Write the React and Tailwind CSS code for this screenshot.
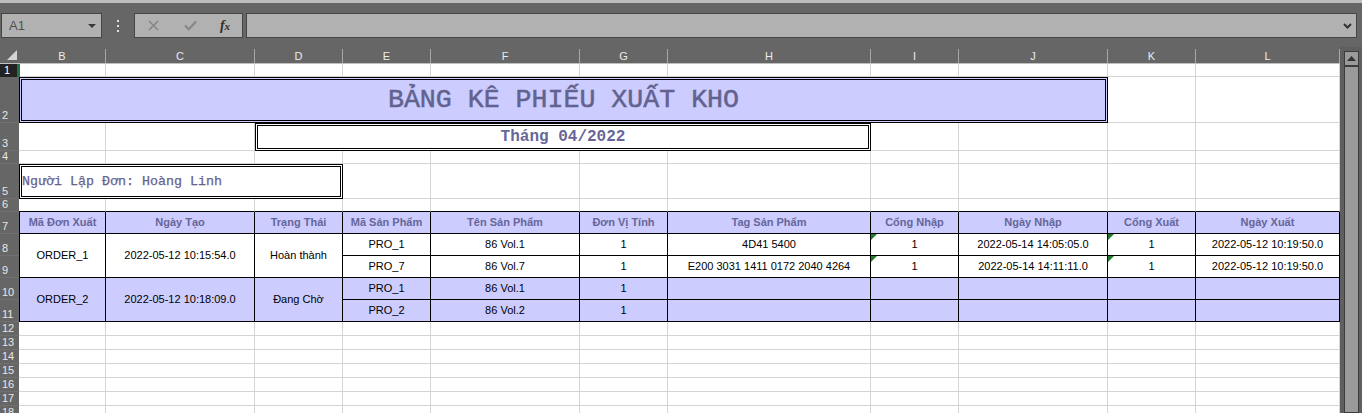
import React from 'react';

const SANS = "font-['Liberation_Sans',Arial,sans-serif]";
const GRID = "border-r border-b border-[#d4d4d4] bg-white";
const RH = "col-start-1 bg-[#666666] text-[#e6e6e6] text-[11px] leading-none flex items-end pl-[2px] pb-[1px] border-b border-[#707070]";
const ROW6 = "border-r border-b border-r-[#d4d4d4] border-b-black bg-white";
const TH = "bg-[#ccccff] border-r border-b border-black flex items-center justify-center font-bold text-[#666699] text-[11px] whitespace-nowrap";
const TD_W = "bg-white border-r border-b border-black flex items-center justify-center text-black text-[11px] whitespace-nowrap relative";
const TD_L = "bg-[#ccccff] border-r border-b border-black flex items-center justify-center text-black text-[11px] whitespace-nowrap relative";

const COLS = ['B', 'C', 'D', 'E', 'F', 'G', 'H', 'I', 'J', 'K', 'L'];
const HEAD = ['Mã Đơn Xuất', 'Ngày Tạo', 'Trạng Thái', 'Mã Sản Phẩm', 'Tên Sản Phẩm', 'Đơn Vị Tính', 'Tag Sản Phẩm', 'Cổng Nhập', 'Ngày Nhập', 'Cổng Xuất', 'Ngày Xuất'];

const ORDERS = [
  {
    id: 'ORDER_1', date: '2022-05-12 10:15:54.0', status: 'Hoàn thành', lav: false,
    items: [
      ['PRO_1', '86 Vol.1', '1', '4D41 5400', '1', '2022-05-14 14:05:05.0', '1', '2022-05-12 10:19:50.0'],
      ['PRO_7', '86 Vol.7', '1', 'E200 3031 1411 0172 2040 4264', '1', '2022-05-14 14:11:11.0', '1', '2022-05-12 10:19:50.0'],
    ],
  },
  {
    id: 'ORDER_2', date: '2022-05-12 10:18:09.0', status: 'Đang Chờ', lav: true,
    items: [
      ['PRO_1', '86 Vol.1', '1', '', '', '', '', ''],
      ['PRO_2', '86 Vol.2', '1', '', '', '', '', ''],
    ],
  },
];

function Tri() {
  return (
    <svg className="absolute top-0 left-0" width="6" height="6" viewBox="0 0 6 6">
      <polygon points="0,0 6,0 0,6" fill="#1f7a2b" />
    </svg>
  );
}

function RowHead({ n, sel }) {
  if (sel) {
    return (
      <div className="col-start-1 relative z-10 -mr-[1px] bg-[#222222] text-white text-[11px] leading-none flex items-end pl-[4px] pb-[1px] border-r-[3px] border-r-[#217346]">
        {n}
      </div>
    );
  }
  return <div className={RH}>{n}</div>;
}

function GridCells({ count, cls = GRID }) {
  return Array.from({ length: count }).map((_, i) => <div key={i} className={cls} />);
}

export default function App() {
  const rows = [];

  rows.push(
    <div key="corner" className="bg-[#666666] border-b border-[#c0c0c0] relative">
      <svg className="absolute left-[7px] top-[3px]" width="10" height="10" viewBox="0 0 10 10">
        <polygon points="10,0 10,10 0,10" fill="#d4d4d4" />
      </svg>
    </div>
  );
  COLS.forEach((c) =>
    rows.push(
      <div key={'h' + c} className="bg-[#666666] pt-[2px] border-b border-[#c0c0c0]">
        <div className="h-full border-r border-[#a8a8a8] flex items-center justify-center text-[#ececec] text-[11px] leading-none">
          {c}
        </div>
      </div>
    )
  );

  rows.push(<RowHead key="r1" n="1" sel />);
  rows.push(<GridCells key="g1" count={11} />);

  rows.push(<RowHead key="r2" n="2" />);
  rows.push(
    <div key="title" className="col-span-9 bg-[#ccccff] border-[3px] border-double border-black flex items-center justify-center">
      <span className="font-['Liberation_Mono','Courier_New',monospace] text-[26.6px] leading-none text-[#62628f] [-webkit-text-stroke:0.5px_#62628f] whitespace-nowrap">
        BẢNG KÊ PHIẾU XUẤT KHO
      </span>
    </div>
  );
  rows.push(<GridCells key="g2" count={2} />);

  rows.push(<RowHead key="r3" n="3" />);
  rows.push(<GridCells key="g3a" count={2} />);
  rows.push(
    <div key="sub" className="col-span-5 bg-white border-[3px] border-double border-black flex items-center justify-center">
      <span className="font-['Liberation_Mono','Courier_New',monospace] font-bold text-[16px] leading-none text-[#666699] whitespace-nowrap">
        Tháng 04/2022
      </span>
    </div>
  );
  rows.push(<GridCells key="g3b" count={4} />);

  rows.push(<RowHead key="r4" n="4" />);
  rows.push(<GridCells key="g4" count={11} />);

  rows.push(<RowHead key="r5" n="5" />);
  rows.push(
    <div key="nguoi" className="col-span-3 bg-white border-[3px] border-double border-black flex items-center">
      <span className="font-['Liberation_Mono','Courier_New',monospace] text-[13.33px] leading-none text-[#66628f] [-webkit-text-stroke:0.25px_#66628f] whitespace-nowrap">
        Người Lập Đơn: Hoàng Linh
      </span>
    </div>
  );
  rows.push(<GridCells key="g5" count={8} />);

  rows.push(<RowHead key="r6" n="6" />);
  rows.push(<GridCells key="g6" count={11} cls={ROW6} />);

  rows.push(<RowHead key="r7" n="7" />);
  HEAD.forEach((h, i) =>
    rows.push(
      <div key={'th' + i} className={i === 0 ? TH + ' border-l' : TH}>
        {h}
      </div>
    )
  );

  let rn = 8;
  ORDERS.forEach((o) => {
    const td = o.lav ? TD_L : TD_W;
    o.items.forEach((it, k) => {
      rows.push(<RowHead key={'r' + rn} n={String(rn)} />);
      if (k === 0) {
        rows.push(<div key={o.id + 'a'} className={td + ' row-span-2 border-l'}>{o.id}</div>);
        rows.push(<div key={o.id + 'b'} className={td + ' row-span-2'}>{o.date}</div>);
        rows.push(<div key={o.id + 'c'} className={td + ' row-span-2'}>{o.status}</div>);
      }
      it.forEach((v, j) =>
        rows.push(
          <div key={o.id + k + 'i' + j} className={td}>
            {!o.lav && (j === 4 || j === 6) ? <Tri /> : null}
            {v}
          </div>
        )
      );
      rn++;
    });
  });

  for (let r = 12; r <= 18; r++) {
    rows.push(<RowHead key={'r' + r} n={String(r)} />);
    rows.push(<GridCells key={'g' + r} count={11} />);
  }

  return (
    <div className={SANS + ' w-[1362px] h-[413px] overflow-hidden bg-[#666666] flex flex-col'}>
      <div className="h-[3px] bg-[#bdbdbd] shrink-0" />
      <div className="h-[44px] shrink-0 flex items-start pt-[10px]">
        <div className="ml-[1px] w-[101px] h-[25px] bg-[#b1b1b1] border border-[#454545] flex items-center justify-between pl-[7px] pr-[5px]">
          <span className="text-[13px] text-[#505050] leading-none">A1</span>
          <svg width="8" height="4" viewBox="0 0 8 4">
            <polygon points="0,0 8,0 4,4" fill="#3a3a3a" />
          </svg>
        </div>
        <div className="w-[32px] h-[25px] flex flex-col items-center justify-center gap-[3px]">
          <div className="w-[2px] h-[2px] bg-[#e0e0e0]" />
          <div className="w-[2px] h-[2px] bg-[#e0e0e0]" />
          <div className="w-[2px] h-[2px] bg-[#e0e0e0]" />
        </div>
        <div className="w-[109px] h-[25px] bg-[#b1b1b1] border border-[#454545] flex items-center">
          <div className="w-[37px] flex justify-center">
            <svg width="11" height="11" viewBox="0 0 11 11">
              <path d="M1 1 L10 10 M10 1 L1 10" stroke="#868686" strokeWidth="1.6" />
            </svg>
          </div>
          <div className="w-[36px] flex justify-center">
            <svg width="13" height="11" viewBox="0 0 13 11">
              <path d="M1 5.5 L4.8 9.3 L12 1.5" stroke="#868686" strokeWidth="2" fill="none" />
            </svg>
          </div>
          <div className="w-[34px] flex justify-center">
            <span className="font-['Liberation_Serif','Times_New_Roman',serif] italic font-bold text-[14px] leading-none text-[#2e2e2e]">
              f<span className="text-[11px]">x</span>
            </span>
          </div>
        </div>
        <div className="ml-[3px] w-[1111px] h-[25px] bg-[#b1b1b1] border border-[#454545] flex items-center justify-end pr-[4px]">
          <svg width="9" height="6" viewBox="0 0 9 6">
            <path d="M1 1 L4.5 4.5 L8 1" stroke="#333333" strokeWidth="2" fill="none" />
          </svg>
        </div>
      </div>
      <div className="flex flex-1 min-h-0">
        <div className="w-[1340px] shrink-0 grid grid-cols-[19px_87px_149px_88px_88px_149px_88px_203px_88px_149px_88px_144px] grid-rows-[17px_13px_46px_28px_13px_35px_13px_22px_22px_22px_22px_22px_14px_14px_14px_14px_14px_14px_14px] content-start">
          {rows}
        </div>
        <div className="w-[22px] shrink-0 bg-[#5f5f5f] pl-[4px] pr-[3px] pt-[4px] flex flex-col">
          <div className="flex-1 border border-[#3c3c3c] bg-[#9a9a9a] flex flex-col">
            <div className="h-[15px] border-b-2 border-[#3c3c3c] flex items-center justify-center">
              <svg width="9" height="5" viewBox="0 0 9 5">
                <polygon points="0,5 9,5 4.5,0" fill="#333333" />
              </svg>
            </div>
          </div>
        </div>
      </div>
    </div>
  );
}
